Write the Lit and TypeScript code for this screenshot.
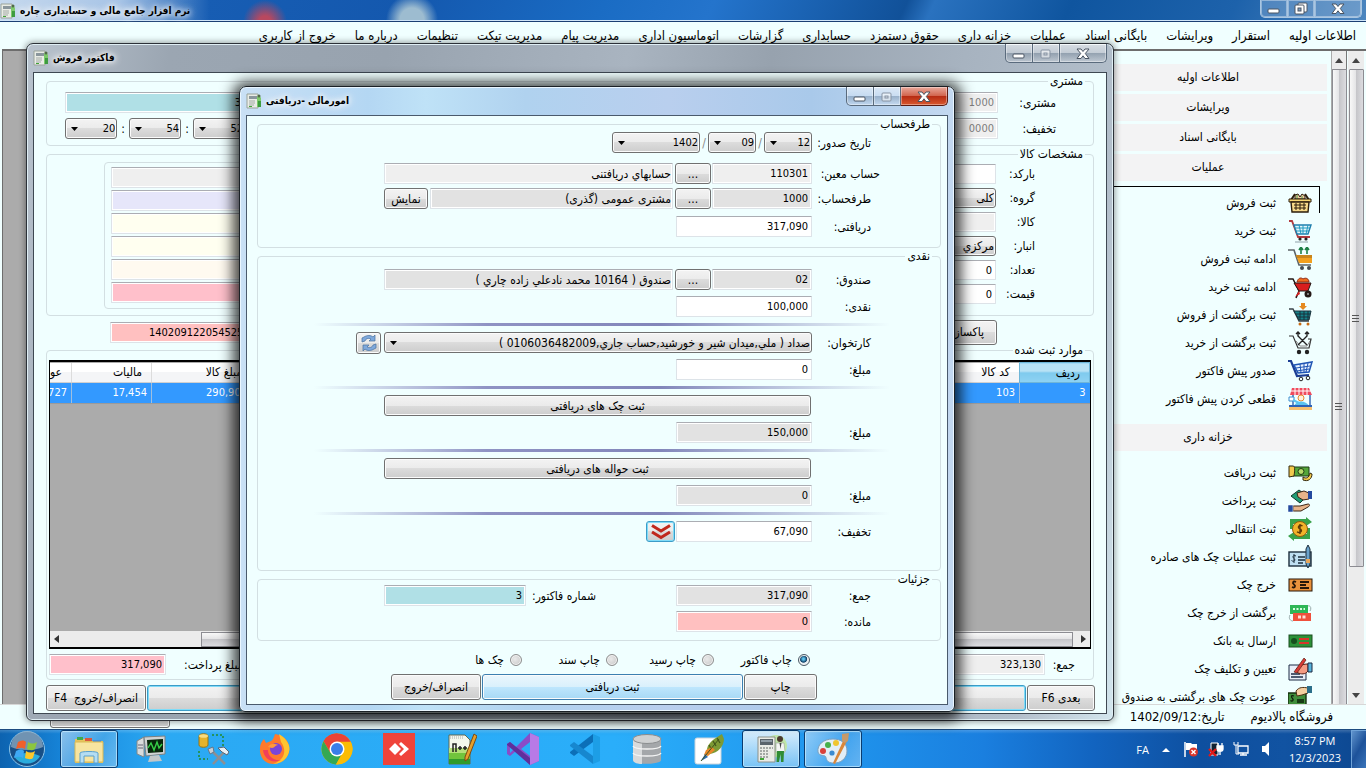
import { LitElement, html, css, svg, nothing } from "lit";
import { customElement } from "lit/decorators.js";

const base = css`
  :host, * { box-sizing: border-box; }
  :host {
    font-family: "DejaVu Sans Condensed", "DejaVu Sans", Tahoma, sans-serif;
    font-size: 12px;
    line-height: 14px;
    color: #000;
  }
  button, input, select { font: inherit; color: inherit; margin: 0; }
  button {
    height: 21px;
    padding: 0 4px;
    border: 1px solid #707070;
    border-radius: 3px;
    background: linear-gradient(#f3f3f3, #ebebeb 50%, #dcdcdc 50%, #cdcdcd);
    box-shadow: inset 0 0 0 1px #fbfbfb;
    text-align: center;
    white-space: nowrap;
  }
  button.focus { border-color: #3c9cc8; box-shadow: inset 0 0 0 1px #7fdcf8; }
  button.hot {
    border-color: #3c7fb1;
    background: linear-gradient(#eaf6fd, #d9f0fc 50%, #bee6fd 50%, #a7d9f5);
  }
  .field {
    height: 21px;
    min-width: 0;
    padding: 0 3px;
    border: 1px solid #dde3e8;
    border-top-color: #abadb3;
    border-radius: 1px;
    background: #fff;
    box-shadow: inset 0 0 0 1px #fff;
    direction: rtl;
    text-align: right;
    font-size: 11px;
    outline: none;
  }
  .text { font-size: 12px; padding: 0 1px; }
  .gray { background: #e2e2e2; }
  .soft { background: #efefef; }
  .off { background: #efefef; color: #7d7d7d; }
  .teal { background: #b0e0e6; }
  .rose { background: #ffc0c0; }
  .pink { background: #ffc0cb; }
  .lav { background: #e6e6fa; }
  .ivory { background: #fffff0; }
  .cream { background: #fffaf0; }
  .combo {
    height: 21px;
    min-width: 0;
    appearance: none;
    padding: 0 1px 0 18px;
    border: 1px solid #707070;
    border-radius: 3px;
    background:
      url("data:image/svg+xml,%3Csvg xmlns='http://www.w3.org/2000/svg' width='7' height='4'%3E%3Cpath d='M0 0h7L3.5 4z'/%3E%3C/svg%3E") no-repeat 5px 8px,
      linear-gradient(#f3f3f3, #ebebeb 50%, #dcdcdc 50%, #cdcdcd);
    box-shadow: inset 0 0 0 1px #fbfbfb;
    direction: rtl;
    text-align: right;
  }
  .digits { font-size: 11px; }
  fieldset {
    margin: 0 0 2px;
    padding: 0;
    min-width: 0;
    border: 1px solid #d3dfe2;
    border-radius: 4px;
  }
  legend { height: 12px; line-height: 12px; margin-inline-start: 8px; padding: 0 2px; }
  label { white-space: nowrap; }
  .row { display: flex; align-items: center; }
  .grow { flex: 1; min-width: 0; }

  .frame {
    display: flex;
    flex-direction: column;
    height: 100%;
    padding: 0 6px 6px;
    border: 1px solid #2c3138;
    border-radius: 7px 7px 6px 6px;
  }
  .title { display: flex; height: 28px; direction: ltr; align-items: center; gap: 4px; }
  .title h1 {
    margin: 0;
    flex: 1;
    font-size: 10px;
    font-weight: 700;
    text-shadow: 0 0 5px #fff, 0 0 8px #fff, 0 0 10px #fff;
    direction: rtl;
    text-align: left;
  }
  .caps { display: flex; align-self: flex-start; }
  .caps button {
    display: grid;
    place-items: center;
    width: 28px;
    height: 19px;
    padding: 0;
    border: 1px solid #5a6b7d;
    border-top: 0;
    border-radius: 0;
    background: linear-gradient(#ffffff80, #ffffff40 50%, #52657a50 50%, #ffffff30);
    box-shadow: inset 0 0 0 1px #ffffff60;
  }
  .caps button + button { border-left: 0; width: 27px; }
  .caps button:first-child { border-bottom-left-radius: 5px; }
  .caps button:last-child { width: 47px; border-bottom-right-radius: 5px; }
  .caps .red { background: linear-gradient(#e9a99c, #d2664f 48%, #b52a12 50%, #d9592f); border-color: #5c1a10; }
  svg { display: block; flex: none; }
`;

const capMin = svg`<rect x="2" y="7" width="11" height="4" rx="1" fill="#fff" stroke="#4a5563"/>`;
const capMax = svg`<rect x="3" y="3" width="9" height="8" rx="1" fill="#ffffff90" stroke="#8793a3"/><rect x="6" y="6" width="3" height="2" fill="none" stroke="#8793a3"/>`;
const capRestore = svg`<rect x="5" y="1" width="9" height="9" rx="1" fill="#fff" stroke="#4a5563"/><rect x="2" y="3" width="9" height="9" rx="1" fill="#fff" stroke="#4a5563"/><rect x="5" y="6" width="3" height="3" fill="#7fa0c4" stroke="#4a5563"/>`;
const capClose = svg`<path d="M2 2h4l2 2.500 2-2.500h4L10.300 6.500 14 11.500h-4L8 8.800 6 11.500H2l3.700-5z" fill="#fff" stroke="#4a5563" stroke-linejoin="round"/>`;

const glyph = (g: unknown) => html`<svg width="16" height="13" viewBox="0 0 16 13" aria-hidden="true">${g}</svg>`;
const caps = (mid: unknown, red = false) => html`<div class="caps">
  <button aria-label="کوچک کردن">${glyph(capMin)}</button>
  <button aria-label="بزرگ کردن">${glyph(mid)}</button>
  <button aria-label="بستن" class=${red ? "red" : ""}>${glyph(capClose)}</button>
</div>`;

const appGlyph = svg`
  <circle cx="21" cy="13" r="11" fill="#bfe6a8"/>
  <path d="M3 4h17v25H3z" fill="#e9ebe6" stroke="#8c918a"/>
  <path d="M5 6h13v6H5z" fill="#59636b"/><path d="M6 7h11v2H6z" fill="#8e9ba5"/>
  <path d="M5 15h13M5 18h9M5 21h9M5 24h9" stroke="#8d9490" stroke-width="1.500" stroke-dasharray="2 1"/>
  <path d="M5 25h4v2H5z" fill="#3fa535"/>
  <circle cx="25" cy="6" r="3" fill="#4b3a2e"/>
  <path d="M21 10h8l1 9h-9z" fill="#f4f6f4" stroke="#93a093" stroke-width=".6"/>
  <path d="M22 18h7l-.5 11h-2.500L25.500 21 24 29h-2.500z" fill="#2e8c35"/>
  <path d="M24.500 10l1 6 1-6z" fill="#444"/>`;

const smallGlyph = svg`
  <path d="M1 1h11v14H1z" fill="#e9ece6" stroke="#9aa39a"/>
  <path d="M3 3h8v3H3z" fill="#8a969c"/>
  <path d="M3 8h6M3 10h6M3 12h5" stroke="#a3aaa5"/>
  <path d="M3 13h3v1H3z" fill="#3fa535"/>
  <path d="M11 4l2-2 2 3v9h-4z" fill="#7cc96a"/><path d="M12 8h3v6h-3z" fill="#3a9a3c"/>
  <circle cx="13" cy="3" r="1.500" fill="#4f6b45"/>`;
const appIcon = html`<svg width="16" height="16" viewBox="0 0 16 16" aria-hidden="true">${smallGlyph}</svg>`;

const bill = (fill: string, ink: string) => svg`<rect x="1" y="6" width="23" height="12" fill=${fill} stroke=${ink}/>`;

const sideIcons: Record<string, unknown> = {
  basket: svg`<path d="M3 9l4-6M21 9l-4-6" stroke="#2b1d0c" stroke-width="2"/>
    <path d="M7 8V4l3-1 2 3 2-3 3 2v3z" fill="#f3c9a0" stroke="#2b1d0c"/><path d="M9 4v4M14 5v3" stroke="#49a04b"/>
    <path d="M1 8h22v3H1z" fill="#f7d774" stroke="#2b1d0c"/>
    <path d="M3 11h18l-1 10H4z" fill="#f7d98a" stroke="#2b1d0c" stroke-width="1.400"/>
    <path d="M6 14h12M6 17h12M8 12v7M12 12v7M16 12v7" stroke="#2b1d0c"/>`,
  buy: svg`<path d="M1 2h3l6 16h12" fill="none" stroke="#b23a3f" stroke-width="1.800"/>
    <path d="M6 6h17l-3 9H9z" fill="#e4f6fb" stroke="#1f7fae" stroke-width="1.400"/>
    <path d="M7 9h15M8 12h13M11 6l2 9M15 6v9M20 6l-2 9" stroke="#1f9ac0"/>
    <circle cx="12" cy="20" r="1.600" fill="#222"/><circle cx="18" cy="20" r="1.600" fill="#222"/><path d="M7 23h13" stroke="#8fa2aa"/>`,
  cartOrange: svg`<path d="M0 3h6l5 15h12" fill="none" stroke="#5d6468" stroke-width="1.600"/>
    <path d="M8 8h16v8H11z" fill="#f2a01f"/><path d="M8 8h16v3H9z" fill="#c9851c"/>
    <path d="M13 7V1M11 3l2-3 2 3M19 7V1M17 3l2-3 2 3" stroke="#1d7f46" stroke-width="1.600" fill="none"/>
    <circle cx="14" cy="21" r="2" fill="#434b52"/><circle cx="21" cy="21" r="2" fill="#434b52"/>`,
  barrow: svg`<path d="M0 4h5l6 12-3 7" fill="none" stroke="#231815" stroke-width="1.500"/>
    <path d="M6 8h17l-3 8h-9z" fill="#d81e1e" stroke="#231815"/><path d="M9 7c1-4 4-5 6-3 3-2 6 0 6 3z" fill="#ef6b1e" stroke="#8f2a12"/>
    <path d="M11 16l-4 6 5-3" fill="#d81e1e"/><circle cx="20" cy="19" r="3.500" fill="#231815"/><circle cx="20" cy="19" r="1" fill="#999"/>`,
  cartDown: svg`<path d="M1 6h4l6 12h10" fill="none" stroke="#39434a" stroke-width="1.400"/>
    <path d="M6 8h17l-2 9H11z" fill="#16828a" stroke="#18303a"/><path d="M8 11h14M9 14h12M12 8v9M16 8v9M20 8v9" stroke="#18303a"/>
    <path d="M13 0h4v3h2l-4 4-4-4h2z" fill="#e58a1f"/><circle cx="12" cy="21" r="1.500" fill="#c96a12"/><circle cx="20" cy="21" r="1.500" fill="#c96a12"/>`,
  cartLine: svg`<path d="M1 5h4l5 12h11l2-9h-3" fill="none" stroke="#333" stroke-width="1.200"/>
    <path d="M8 10l4 5h7l3-5" fill="none" stroke="#888"/>
    <path d="M10 1v4l9 9M19 1v4l-9 9M8 3l2-2 2 2M17 3l2-2 2 2" fill="none" stroke="#222" stroke-width="1.400"/>
    <circle cx="11" cy="21" r="2.200" fill="#222"/><circle cx="19" cy="21" r="2.200" fill="#222"/>`,
  cartBlue: svg`<path d="M0 2h3l6 15 12-1" fill="none" stroke="#1c3d94" stroke-width="2.200"/>
    <path d="M6 6l18-3-3 10-11 1z" fill="#e8f2ff" stroke="#1f55b5" stroke-width="1.500"/>
    <path d="M8 9l14-2M9 12l12-2M12 5l1 9M16 4v9M20 4l-2 9" stroke="#1f55b5"/>
    <circle cx="13" cy="20" r="1.800" fill="none" stroke="#222"/><circle cx="20" cy="19" r="1.800" fill="none" stroke="#222"/>`,
  shop: svg`<path d="M4 1h17l3 7H2z" fill="#ef4b5d"/><path d="M7 1v7M11 1v7M15 1v7M19 1v7M3 4h20" stroke="#fff"/>
    <path d="M5 8v12M22 8v12" stroke="#3b6bb5" stroke-width="1.500"/><circle cx="13" cy="11" r="3" fill="#fff1dc" stroke="#e78b2d"/>
    <path d="M6 19c2-6 12-6 15 0z" fill="#5cc4f0"/><path d="M1 10h5v4H1z" fill="#fff" stroke="#3d8fd0"/><path d="M5 13l6 3" stroke="#5cc4f0" stroke-width="2"/>
    <path d="M1 19h23v4H1z" fill="#f6c070"/><path d="M1 18h23v2H1z" fill="#2d63b8"/>`,
  receive: svg`<path d="M5 6h16v9H5z" fill="#54a63a" stroke="#1e3a14"/><circle cx="13" cy="10.500" r="3" fill="#b7dc6a" stroke="#1e3a14"/>
    <path d="M1 5h4c2 0 2 4 1 10l-5 1z" fill="#f2c94c" stroke="#332a10"/><path d="M15 16c3 2 6 1 7-4l2 1c0 5-4 8-9 6z" fill="#f2c94c" stroke="#332a10"/>`,
  pay: svg`<path d="M3 7l8-6 8 6-7 7z" fill="#1f9d75" stroke="#10382c"/><path d="M9 4l7-2 5 2v6l-6 1-5-3z" fill="#e7b48a" stroke="#3b2415"/>
    <path d="M20 2h4v8h-4z" fill="#234a9f"/><path d="M5 17h7l8-2c2 0 2 2 0 3l-7 4H5z" fill="#e7b48a" stroke="#3b2415"/><path d="M0 16h5v7H0z" fill="#234a9f" stroke="#fff" stroke-width=".5"/>`,
  transfer: svg`<path d="M2 2h16V0l6 5-6 4V7H5v5H2z" fill="#3aa24a"/><path d="M22 22H6v2l-6-5 6-4v2h13v-6h3z" fill="#3aa24a"/>
    <circle cx="12" cy="12" r="7.500" fill="#f2b32a" stroke="#8d5b10"/><path d="M14.500 9c-3-2-6 1.500-2.500 3s0 5-3 2.700M12 7v10" fill="none" stroke="#5c3a08" stroke-width="1.400"/>`,
  check: svg`<rect x="1" y="7" width="22" height="14" fill="#bfe0f2" stroke="#1c2e3c" stroke-width="1.400"/>
    <path d="M8 11c-3-1.500-4 1-2 2.500s0 4-2.500 2M6 9v9" fill="none" stroke="#1c2e3c"/><path d="M10 12h7M10 15h7M10 18h5" stroke="#1c2e3c" stroke-width="1.400"/>
    <path d="M18 4l2-4 2 4v15l-2 4-2-4z" fill="#6aa3cc" stroke="#1c2e3c"/><path d="M18 14h4v4h-4z" fill="#e7a75a"/>`,
  spend: svg`${bill("#e9923c", "#26170a")}<path d="M8 9c-3-1.500-4 1-2 2.500s1 4-2 2.500M12 9h9M12 12h6M12 15h9" fill="none" stroke="#26170a" stroke-width="1.800"/>`,
  back: svg`<rect x="2" y="4" width="18" height="9" fill="#2eb757"/><path d="M5 8h12" stroke="#d7ffe2" stroke-dasharray="2 1.500" stroke-width="2"/>
    <rect x="5" y="12" width="18" height="8" fill="#f0503c"/><path d="M10 16h9" stroke="#ffe0d8" stroke-dasharray="3 1.500" stroke-width="3"/><path d="M2 14c-2 4 1 6 3 6M22 10c2-3 0-6-2-5" stroke="#9aa" fill="none"/>`,
  bank: svg`${bill("#2d9138", "#1b4f20")}<circle cx="6" cy="12" r="3" fill="#174f1e"/><path d="M11 10h10M11 14h10" stroke="#d8352a" stroke-width="2"/>`,
  sign: svg`<path d="M1 8h17v15H1z" fill="#e8eef8" stroke="#1d2b45"/><path d="M3 17h9M3 20h12" stroke="#1d2b45" stroke-width="1.400"/>
    <path d="M8 13c2-4 6-6 12-6v7c-3 4-7 3-10 2z" fill="#f49b83" stroke="#5b1e14"/><path d="M6 15l10-14 2 2-9 13z" fill="#d83a34" stroke="#5b1e14" stroke-width=".7"/><path d="M20 6h4v9h-4z" fill="#56b3dc" stroke="#1d2b45"/>`,
  refund: svg`<path d="M0 8h18v12H0z" fill="#3f8d3a" stroke="#16300f" stroke-width="1.400"/><path d="M6 11c-3-1-3 1-1.500 2.500s0 3.500-2 2M9 15h7M9 17h7" stroke="#0d1f0a" fill="none" stroke-width="1.300"/>
    <path d="M8 6c3-4 7-4 12-3v5l-6 2-5 1z" fill="#f4cfa0" stroke="#4b2e12"/><path d="M19 1h5v7h-5z" fill="#2c6f8a"/>`,
};

const topHeads = ["اطلاعات اولیه", "ویرایشات", "بایگانی اسناد", "عملیات"];
const sales = [
  ["basket", "ثبت فروش"], ["buy", "ثبت خرید"], ["cartOrange", "ادامه ثبت فروش"], ["barrow", "ادامه ثبت خرید"],
  ["cartDown", "ثبت برگشت از فروش"], ["cartLine", "ثبت برگشت از خرید"], ["cartBlue", "صدور پیش فاکتور"], ["shop", "قطعی کردن پیش فاکتور"],
];
const treasury = [
  ["receive", "ثبت دریافت"], ["pay", "ثبت پرداخت"], ["transfer", "ثبت انتقالی"], ["check", "ثبت عملیات چک های صادره"],
  ["spend", "خرج چک"], ["back", "برگشت از خرج چک"], ["bank", "ارسال به بانک"], ["sign", "تعیین و تکلیف چک"], ["refund", "عودت چک های برگشتی به صندوق"],
];

@customElement("side-menu")
class SideMenu extends LitElement {
  static styles = [base, css`
    :host { display: flex; direction: rtl; min-height: 0; overflow: hidden; padding-right: 2px; background: #f0ffff; border-top: 2px solid #6d6d6d; }
    nav { width: 242px; padding: 13px 4px 0 0; overflow: hidden; }
    .head { height: 27px; margin-bottom: 3px; background: #f3f3f4; text-align: center; line-height: 27px; }
    .list { padding: 5px 14px 0 0; }
    .item { display: flex; height: 28px; align-items: center; gap: 12px; color: inherit; text-decoration: none; white-space: nowrap; }
    .sales { margin: 5px 7px 11px 0; padding: 2px 7px 0 0; border-top: 1px solid #000; position: relative; }
    .sales::after { content: ""; position: absolute; top: 0; right: 0; height: 26px; border-right: 1px solid #000; }
    .bar { width: 16px; display: flex; flex-direction: column; align-items: center; background: #ececec; flex: none; }
    .bar.inner { border-right: 1px solid #777; border-left: 1px solid #aaa; }
    .bar.outer { margin-left: 1px; }
    .arrow { height: 18px; display: grid; place-items: center; }
    .thumb { width: 15px; border: 1px solid #8c8c92; border-radius: 1px; background: linear-gradient(90deg, #f8f8f8, #e4e4e6 45%, #c6c6ca 50%, #dcdce0); display: grid; place-items: center; }
    .inner .thumb { flex: 1; border-bottom: 0; padding-top: 38px; }
    .outer .thumb { height: 498px; }
    .spare { flex: 1; }
  `];
  row([icon, text]: string[]) {
    return html`<a class="item" href="#"><svg width="25" height="24" viewBox="0 0 25 24" aria-hidden="true">${sideIcons[icon]}</svg><span>${text}</span></a>`;
  }
  render() {
    const grip = html`<svg width="8" height="8" aria-hidden="true"><path d="M0 1.500h7M0 4.500h7M0 7.500h7" stroke="#555"/></svg>`;
    const up = html`<span class="arrow"><svg width="8" height="5" aria-hidden="true"><path d="M0 5h8L4 0z" fill="#444"/></svg></span>`;
    const down = html`<span class="arrow"><svg width="8" height="5" aria-hidden="true"><path d="M0 0h8L4 5z" fill="#444"/></svg></span>`;
    return html`
      <div class="bar outer">${up}<div class="thumb">${grip}</div><span class="spare"></span>${down}</div>
      <div class="bar inner">${up}<div class="thumb">${grip}</div></div>
      <nav>
        ${topHeads.map((t) => html`<div class="head">${t}</div>`)}
        <div class="list sales">${sales.map((r) => this.row(r))}</div>
        <div class="head">خزانه داری</div>
        <div class="list">${treasury.map((r) => this.row(r))}</div>
      </nav>`;
  }
}

@customElement("sale-window")
class SaleWindow extends LitElement {
  static styles = [base, css`
    :host { display: block; direction: rtl; }
    .frame {
      background: linear-gradient(100deg, #b9c3ce, #9ba6b2 12%, #98a3af 30%, #a9b4c0 50%, #97a2ae 62%, #a7b3c0 78%, #b3bfcb 92%, #d3e6ee);
      box-shadow: inset 0 0 0 1px #dfeef4, 0 0 6px 1px #00000060;
    }
    .client { flex: 1; min-height: 0; display: flex; flex-direction: column; padding: 2px 12px; background: #f0ffff; border: 1px solid #3e4852; }
    .client > fieldset { padding-bottom: 6px; }
    .cust { display: flex; justify-content: space-between; padding: 5px 37px 0 18px; }
    .pair { display: flex; flex-direction: column; gap: 5px; }
    .pair label { width: 58px; }
    .who { width: 160px; }
    .time { width: 180px; gap: 4px; }
    .time select { flex: 1; }
    .goods { display: flex; justify-content: space-between; padding: 2px 58px 0 57px; }
    .items { display: grid; gap: 4px; align-content: start; padding-top: 2px; }
    .items label { width: 39px; }
    .items .field, .items .combo { height: 20px; width: 200px; }
    .stack { display: grid; gap: 2px; width: 300px; padding: 4px 6px 5px; border: 1px solid #d3dfe2; border-radius: 4px; }
    .mid { justify-content: space-between; padding: 2px 97px 0 64px; height: 26px; }
    .mid button { height: 25px; width: 64px; }
    .mid .field { width: 150px; }
    .client > .list { flex: 1; display: flex; flex-direction: column; min-height: 0; padding-bottom: 4px; }
    .lines { height: 100%; display: flex; flex-direction: column; min-height: 0; }
    .wrap { display: flex; flex-direction: column; flex: 1; margin: 4px 2px 5px; overflow: hidden; background: #ababab; border: 1px solid #000; border-width: 2px 1px; }
    table { width: calc(100% + 59px); border-collapse: collapse; table-layout: fixed; }
    th { height: 20px; padding: 0 9px; font-weight: 400; text-align: right; white-space: nowrap; background: linear-gradient(#fff 50%, #f4f5f7 50%); border-left: 1px solid #dcdcdc; border-bottom: 1px solid #d0d0d0; }
    th.sel { background: linear-gradient(#b8e2f5 40%, #7fcaee 50%, #8fd3f3); border: 1px solid #6fb6d8; }
    td { height: 21px; padding: 0 4px; font-size: 11px; background: #3399ff; color: #fff; border-left: 1px solid #9fbfdf; border-bottom: 1px solid #9a9a9a; }
    .no { width: 70px; } .code { width: 80px; } .price { width: 100px; } .tax { width: 80px; } .duty { width: 80px; }
    .hbar { display: flex; align-items: center; justify-content: space-between; height: 16px; margin-top: auto; background: #ececec; direction: ltr; padding: 0 4px; }
    .hthumb { flex: 1; height: 15px; margin: 0 8px 0 142px; border: 1px solid #8c8c92; background: linear-gradient(#f8f8f8, #e4e4e6 45%, #c6c6ca 50%, #dcdce0); }
    .sum { justify-content: space-between; padding: 0 18px 0 2px; }
    .sum label { width: 30px; }
    .sum .pay { width: auto; padding-left: 18px; }
    .sum .field { width: 117px; }
    .foot { display: flex; gap: 1px; margin: 3px -1px 0 0; }
    .foot button { height: 26px; }
    .foot .next { width: 68px; } .foot .quit { width: 100px; }
  `];
  render() {
    const goods: [string, string, string][] = [
      ["bar", "بارکد:", ""], ["grp", "گروه:", "کلی"], ["item", "کالا:", ""], ["store", "انبار:", "مرکزي"], ["qty", "تعداد:", "0"], ["cost", "قیمت:", "0"],
    ];
    return html`<section class="frame" aria-label="فاکتور فروش">
      <div class="title">${appIcon}<h1>فاکتور فروش</h1>${caps(capMax)}</div>
      <div class="client">
        <fieldset><legend>مشتری</legend><div class="cust">
          <div class="pair">
            <div class="row"><label for="c1">مشتری:</label><input id="c1" class="field off who" value="1000" disabled></div>
            <div class="row"><label for="c2">تخفیف:</label><input id="c2" class="field off who" value="0000" disabled></div>
          </div>
          <div class="pair">
            <input class="field teal time" aria-label="شماره" value="3">
            <div class="row time">
              <select class="combo digits" aria-label="ثانیه"><option>52</option></select>:
              <select class="combo digits" aria-label="دقیقه"><option>54</option></select>:
              <select class="combo digits" aria-label="ساعت"><option>20</option></select>
            </div>
          </div>
        </div></fieldset>
        <fieldset><legend>مشخصات کالا</legend><div class="goods">
          <div class="items">${goods.map(([id, l, v]) => html`<div class="row"><label for=${id}>${l}</label>${id === "grp" || id === "store"
            ? html`<select id=${id} class="combo"><option>${v}</option></select>`
            : html`<input id=${id} class="field ${id === "item" ? "soft" : ""}" .value=${v}>`}</div>`)}</div>
          <div class="stack">${["soft", "lav", "ivory", "ivory", "cream", "pink"].map((c) => html`<input class="field ${c}" aria-label="اطلاعات کالا" readonly>`)}</div>
        </div></fieldset>
        <div class="row mid"><button>پاکسازی</button><input class="field rose" aria-label="شناسه" value="14020912205452528"></div>
        <fieldset class="list"><legend>موارد ثبت شده</legend><div class="lines">
          <div class="wrap">
            <table>
              <thead><tr><th class="no sel">ردیف</th><th class="code">کد کالا</th><th></th><th class="price">مبلغ کالا</th><th class="tax">مالیات</th><th class="duty">عوارض</th></tr></thead>
              <tbody><tr><td>3</td><td>103</td><td></td><td>290,909</td><td>17,454</td><td>8,727</td></tr></tbody>
            </table>
            <div class="hbar">
              <svg width="5" height="8" aria-hidden="true"><path d="M5 0v8L0 4z" fill="#333"/></svg><span class="hthumb"></span>
              <svg width="5" height="8" aria-hidden="true"><path d="M0 0v8l5-4z" fill="#333"/></svg>
            </div>
          </div>
          <div class="row sum">
            <div class="row"><label for="total">جمع:</label><input id="total" class="field soft" value="323,130"></div>
            <div class="row"><label class="pay" for="paid">مبلغ پرداخت:</label><input id="paid" class="field pink" value="317,090"></div>
          </div>
        </div></fieldset>
        <div class="foot"><button class="next">بعدی F6</button><button class="grow focus" aria-label="ثبت"></button><button class="quit">انصراف/خروج&nbsp; F4</button></div>
      </div>
    </section>`;
  }
}

@customElement("receipt-dialog")
class ReceiptDialog extends LitElement {
  static styles = [base, css`
    :host { display: block; direction: rtl; }
    .frame {
      height: auto;
      background: linear-gradient(90deg, #c9e0f5, #b4d7f3 18%, #bfe2f7 26%, #b0d2ef 40%, #b9cfee 60%, #a9c9ea 80%, #c3d8f0);
      border-color: #1b2126;
      box-shadow: inset 0 0 0 1px #eaf6ff, 0 2px 14px 6px #000000c0;
    }
    .client { padding: 2px 6px 4px 10px; background: #f0ffff; border: 1px solid #4a5a6c; }
    .rows { display: grid; grid-template-columns: minmax(0, 1fr); gap: 6px; padding: 0 60px 8px 126px; }
    .party { padding-top: 2px; padding-bottom: 10px; gap: 4px; }
    .date { margin-bottom: 6px; }
    .gap { margin-top: 3px; }
    .cash { padding-top: 7px; padding-bottom: 28px; }
    .sums { gap: 5px; }
    .row label { width: 68px; padding-right: 9px; }
    .row .wide { padding-right: 0; }
    .d { width: 48px; } .y { width: 88px; }
    .date i { width: 8px; text-align: center; color: #888; font-style: normal; }
    .code { width: 100px; }
    .dots { width: 36px; margin: 0 1px 0 2px; }
    .show { width: 44px; margin-right: 2px; padding: 0; }
    .num { width: 136px; }
    hr { height: 3px; margin: 0 -10px 0 -70px; border: 0; background: linear-gradient(90deg, #8888b800, #8f93c4 30%, #8286ba 60%, #8888b800); align-self: center; }
    .bank { position: relative; }
    .sync { position: absolute; left: -28px; width: 25px; height: 22px; padding: 0; display: grid; place-items: center; }
    .full { margin-right: 69px; }
    .more { width: 29px; margin-right: 1px; padding: 0; display: grid; place-items: center; }
    .sums .inv { width: auto; padding: 0 0 0 6px; margin-right: auto; }
    .invno { width: 142px; }
    .opts { display: flex; margin-top: 9px; padding-right: 131px; height: 20px; }
    .opts label { width: 96px; display: flex; align-items: center; gap: 6px; }
    .opts input {
      appearance: none; width: 12px; height: 12px; border: 1px solid #8e8f8f; border-radius: 50%;
      background: radial-gradient(circle at 40% 40%, #e9e9e9, #c4c4c4); box-shadow: inset 0 0 0 1px #f4f4f4;
    }
    .opts input:checked { border-color: #4a5a66; background: radial-gradient(circle at 45% 40%, #5fc5ee 10%, #0f3f66 40%, #e8eef2 50%); }
    .acts { display: flex; gap: 1px; margin: 4px 124px 0 134px; }
    .acts button { height: 26px; }
    .print { width: 73px; } .cancel { width: 90px; }
  `];
  amount(id: string, label: string, value: string, cls = "", extra: unknown = nothing) {
    return html`<div class="row ${id === "got" ? "gap" : ""}"><label for=${id}>${label}</label><input id=${id} class="field num ${cls}" .value=${value}>${extra}</div>`;
  }
  lookup(id: string, label: string, code: string, name: string, cls: string, extra: unknown = nothing) {
    return html`<div class="row"><label for=${id} class=${id === "acc" ? "wide" : ""}>${label}</label><input id=${id} class="field code ${cls}" .value=${code}>
      <button class="dots">...</button><input class="field text grow ${cls}" aria-label="نام" .value=${name}>${extra}</div>`;
  }
  render() {
    return html`<section class="frame" role="dialog" aria-label="امورمالی -دریافتی">
      <div class="title">${appIcon}<h1>امورمالی -دریافتی</h1>${caps(capMax, true)}</div>
      <div class="client">
        <fieldset><legend>طرفحساب</legend><div class="rows party">
          <div class="row date"><label for="day">تاریخ صدور:</label>
            <select id="day" class="combo digits d"><option>12</option></select><i>/</i>
            <select class="combo digits d" aria-label="ماه"><option>09</option></select><i>/</i>
            <select class="combo digits y" aria-label="سال"><option>1402</option></select></div>
          ${this.lookup("acc", "حساب معین:", "110301", "حسابهاي دریافتنی", "soft")}
          ${this.lookup("party", "طرفحساب:", "1000", "مشتری عمومی (گذری)", "gray", html`<button class="show">نمایش</button>`)}
          ${this.amount("got", "دریافتی:", "317,090")}
        </div></fieldset>
        <fieldset><legend>نقدی</legend><div class="rows cash">
          ${this.lookup("box", "صندوق:", "02", "صندوق ( 10164 محمد نادعلي زاده چاري )", "gray")}
          ${this.amount("cash", "نقدی:", "100,000")}
          <hr>
          <div class="row bank"><label for="pos">کارتخوان:</label>
            <select id="pos" class="combo grow"><option>صداد ( ملي,میدان شیر و خورشید,حساب جاري,0106036482009 )</option></select>
            <button class="sync" aria-label="بازخوانی"><svg width="16" height="16" viewBox="0 0 16 16" aria-hidden="true">
              <path d="M1 7V3l2-1c3-2 7-2 9 0l2-2v6H8l2-2C8 3 5 3 4 6z" fill="#7fa9dc" stroke="#47709f" stroke-width=".7"/>
              <path d="M15 9v4l-2 1c-3 2-7 2-9 0l-2 2v-6h6l-2 2c2 1 5 1 6-2z" fill="#7fa9dc" stroke="#47709f" stroke-width=".7"/></svg></button></div>
          ${this.amount("posAmt", "مبلغ:", "0")}
          <hr>
          <button class="full">ثبت چک های دریافتی</button>
          ${this.amount("chkAmt", "مبلغ:", "150,000", "gray")}
          <hr>
          <button class="full">ثبت حواله های دریافتی</button>
          ${this.amount("trAmt", "مبلغ:", "0", "gray")}
          <hr>
          ${this.amount("disc", "تخفیف:", "67,090", "", html`<button class="more focus" aria-label="بیشتر"><svg width="20" height="16" viewBox="0 0 20 16" aria-hidden="true">
            <path d="M1 1.500l9 5.500 9-5.500M1 8l9 5.500L19 8" fill="none" stroke="#c0271c" stroke-width="3"/></svg></button>`)}
        </div></fieldset>
        <fieldset><legend>جزئیات</legend><div class="rows sums">
          ${this.amount("sum", "جمع:", "317,090", "gray", html`<label class="inv" for="inv">شماره فاکتور:</label><input id="inv" class="field teal invno" value="3">`)}
          ${this.amount("rest", "مانده:", "0", "rose")}
        </div></fieldset>
        <div class="opts">${["چاپ فاکتور", "چاپ رسید", "چاپ سند", "چک ها"].map((t, i) => html`<label><input type="radio" name="print" ?checked=${i === 0}>${t}</label>`)}</div>
        <div class="acts"><button class="print">چاپ</button><button class="grow hot">ثبت دریافتی</button><button class="cancel">انصراف/خروج</button></div>
      </div>
    </section>`;
  }
}

const taskIcons: [string, unknown][] = [
  ["Explorer", svg`<path d="M2 6h10l2 2h16v22H2z" fill="#e8c35c"/><path d="M4 4h6v3H4z" fill="#3faa4c"/><path d="M12 5h7v3h-7z" fill="#d8573f"/><path d="M20 7h8v3h-8z" fill="#4a90d8"/>
    <path d="M2 9h28v20H2z" fill="#f7e4a0" stroke="#d9b955"/><path d="M7 30V20c0-2 18-2 18 0v10h-4v-7H11v7z" fill="#b5ddf2" stroke="#5aa0cc"/>`],
  ["Monitor", svg`<path d="M2 8l7-4v20l-7-3z" fill="#d9dcdd" stroke="#808688"/><path d="M3 12h5M3 15h5" stroke="#667"/><path d="M9 4l21-1v18l-19 2z" fill="#cfd3d4" stroke="#7b8082"/><path d="M12 7l16-1v13l-15 1z" fill="#07260b"/>
    <path d="M13 15l3-5 3 7 3-8 2 6 3-4" fill="none" stroke="#36d048" stroke-width="1.400"/><path d="M15 23l9-1 3 6-14 1z" fill="#c2c7c9"/>`],
  ["Tools", svg`<path d="M2 3c0-3 9-3 9 0v9c0 3-9 3-9 0z" fill="#e5b32b" stroke="#9a7412"/><ellipse cx="6.500" cy="3" rx="4.500" ry="1.800" fill="#f8dc80"/>
    <path d="M15 2h11v11M2 18v8h9" fill="none" stroke="#258a2e" stroke-width="1.500" stroke-dasharray="2 2"/>
    <path d="M14 17l14 14M29 17L16 31" stroke="#8b8f95" stroke-width="2.500"/><path d="M21 15l6-1 5 5-2 3-5-3z" fill="#e6eef5" stroke="#567"/><path d="M11 16l5-2 1 5-4 2z" fill="#c9d0d5" stroke="#678"/>`],
  ["Firefox", svg`<path d="M16 1c9 1 16 8 14 18-2 8-9 12-16 12C6 31 0 24 1 15c0-4 2-7 4-9l2 4 5-2c2-1 3-4 4-7z" fill="#ff7a2b"/>
    <path d="M20 1c8 5 12 12 10 18-2 8-9 12-16 12 12-4 14-14 8-22z" fill="#ffc530"/><path d="M4 17c1 9 9 14 18 10-8 1-13-4-13-10z" fill="#f0405c"/><circle cx="17" cy="16" r="6" fill="#7a45d8"/><path d="M9 14c3-5 8-3 10-2-3 0-3 3-6 3z" fill="#ff9a3a"/>`],
  ["Chrome", svg`<circle cx="16" cy="16" r="15.500" fill="#fbbc05"/><path d="M16 .5A15.500 15.500 0 0 0 2.600 8.200L9.500 20 16 16h14.500A15.500 15.500 0 0 0 29.500 8.500z" fill="#ea4335"/>
    <path d="M2.600 8.200A15.500 15.500 0 0 0 15 31.500l6.500-11.700L16 16l-6.500 4z" fill="#34a853"/><path d="M15 31.500A15.500 15.500 0 0 0 29.500 8.500H16l6 11z" fill="#fbbc05"/><path d="M2.600 8.200A15.500 15.500 0 0 1 29.500 8.500H16z" fill="#ea4335"/><circle cx="16" cy="16" r="7.500" fill="#fff"/><circle cx="16" cy="16" r="6" fill="#3a7ee8"/>`],
  ["AnyDesk", svg`<path d="M0 0h32v32H0z" fill="#ef443b"/><path d="M6 16l6-6 6 6-6 6z" fill="#fff"/><path d="M16 11l2-2 8 7-8 7-2-2 5-5z" fill="#fff"/>`],
  ["Notepad++", svg`<path d="M4 2h16l5 5v24H4z" fill="#f4f8ec" stroke="#5f6b52"/><path d="M4 15h21v8H4z" fill="#b4e079"/><path d="M4 20h21v7H4z" fill="#71c43c"/><path d="M4 26h21v5H4z" fill="#2f9b2b"/><path d="M5 3h14M5 5h14" stroke="#aaa" stroke-dasharray="1 1"/>
    <path d="M8 19v-8h3v8M13 15h4M15 13v4M18 15h4M20 13v4" fill="none" stroke="#222" stroke-width="1.500"/><path d="M32 3l-3-2-9 23v4l3-2z" fill="#e6a02c" stroke="#7d4a12"/>`],
  ["Visual Studio", svg`<path d="M23 0l9 4v24l-9 4L9 18l-6 5-3-2V11l3-2 6 5zM3 12v8l4-4zM23 9l-9 7 9 7z" fill="#8a4cc8" fill-rule="evenodd"/><path d="M23 0l9 4v24l-9 4z" fill="#b77ae6"/><path d="M0 11l3-2 20 16v7L0 12z" fill="#5f2f9c"/>`],
  ["VS Code", svg`<path d="M24 1l7 3v24l-7 3z" fill="#1d9ee6"/><path d="M24 1v8L5 23l-4-3v-1z" fill="#0c6fb8"/><path d="M24 31v-8L5 9l-4 3v1z" fill="#1787cf"/>`],
  ["Database", svg`<path d="M2 6v21c0 5 28 5 28 0V6z" fill="#a4a7aa"/><path d="M2 6v21c0 4 9 4 9 4V8z" fill="#d8dadb"/><path d="M2 13c2 4 26 4 28 0M2 20c2 4 26 4 28 0" fill="none" stroke="#f3f4f4" stroke-width="1.500"/><ellipse cx="16" cy="6" rx="14" ry="4.500" fill="#cfd1d2" stroke="#8b8e90"/>`],
  ["Editor", svg`<rect x="2" y="5" width="26" height="26" rx="2" fill="#fff" stroke="#c9d4dc"/><path d="M29 1c-5 3-14 8-15 15l3 5c8-1 14-8 14-15z" fill="#7c9a35"/><path d="M20 8l3 5M24 5l3 5M16 12l3 5" stroke="#45581c" stroke-width="1.300"/><path d="M13 17l6-3 3 3-7 6-4-1z" fill="#e88728"/><path d="M8 28l4-7 3 3z" fill="#2d6bb0"/><path d="M8 28L26 6" stroke="#41551a"/>`],
  ["Accounting", appGlyph],
  ["Paint", svg`<path d="M16 6C6 6 0 12 1 19c1 4 5 3 7 4s0 6 7 7c9 1 15-5 15-12 0-8-6-12-14-12z" fill="#e3eef6" stroke="#7da0bd"/>
    <circle cx="6" cy="18" r="3" fill="#d9403a"/><circle cx="11" cy="12" r="3" fill="#48b04a"/><circle cx="19" cy="10" r="3" fill="#f0c52e"/><circle cx="15" cy="20" r="2.600" fill="#3b8bd0"/>
    <path d="M27 6l3 2-12 23-2-1z" fill="#d9873a"/><path d="M25 1l7-1-1 8-3 2-3-2z" fill="#c69a6a"/>`],
];

@customElement("task-bar")
class TaskBar extends LitElement {
  static styles = [base, css`
    :host {
      display: flex; direction: ltr; height: 39px; align-items: center; color: #fff; overflow: hidden;
      font-family: "Open Sans", sans-serif; border-top: 1px solid #1c4b80;
      background: linear-gradient(#ffffff30, #ffffff00 10%), linear-gradient(90deg, #0d63b0, #1787dc 5%, #2ba9f3 12%, #2aaefa 45%, #1f93ec 62%, #1a7fdf 72%, #1264c0 80%, #0e4f9f 88%, #1153a2 94%, #0d4790);
    }
    .start { padding: 0 8px; }
    .apps { display: flex; gap: 4px; padding-left: 6px; }
    .app { display: grid; place-items: center; width: 58px; height: 38px; padding: 0; border: 1px solid transparent; background: none; box-shadow: none; }
    .open { border-color: #0a3c70; box-shadow: inset 0 0 0 1px #c8ecffb0; background: linear-gradient(120deg, #ffffff80, #ffffff28 60%, #ffffff50); }
    .active { background: linear-gradient(#ffffffd0, #cdeafb80); }
    .tray { display: flex; align-items: center; margin-left: auto; gap: 9px; font-size: 11px; line-height: 17px; }
    .clock { text-align: center; margin: 0 1px 0 6px; }
    .peek { width: 15px; height: 39px; border: 1px solid #6fa3d8; border-right: 0; border-radius: 0; background: linear-gradient(120deg, #5f93cc, #1d529a 50%, #3b75ba); box-shadow: none; }
  `];
  render() {
    return html`
      <svg class="start" width="54" height="38" viewBox="0 0 38 38" aria-hidden="true">
        <circle cx="19" cy="19" r="17.500" fill="#174f86" stroke="#8ec6ea"/><path d="M3 17a16 16 0 0 1 32 0c-8 4-24 4-32 0z" fill="#8fa9c0" opacity=".75"/><path d="M6 26c5 10 21 10 26 0-8-4-18-4-26 0z" fill="#2fc3f2" opacity=".8"/>
        <path d="M10 12c3-2 6-2 8 0l-1 7c-3-2-6-1-9 0z" fill="#f0602b"/><path d="M20 12c3 2 6 2 9 0l-2 7c-3 2-6 1-8 0z" fill="#8cc63f"/><path d="M8 21c3-2 6-2 8 0l-1 7c-3-2-6-1-9 0z" fill="#3fa9f5"/><path d="M18 21c3 2 6 2 9 0l-2 7c-2 2-6 1-8 0z" fill="#fcc72b"/>
      </svg>
      <div class="apps">${taskIcons.map(([name, g], i) => html`<button class="app ${i === 0 || i > 10 ? "open" : ""} ${i === 11 ? "active" : ""}" aria-label=${name}>
        <svg width="32" height="32" viewBox="0 0 32 32" aria-hidden="true">${g}</svg></button>`)}</div>
      <div class="tray">
        <span>FA</span>
        <svg width="16" height="16" viewBox="0 0 16 16" aria-hidden="true"><path d="M4 11h8L8 7z" fill="#fff"/></svg>
        <svg width="16" height="16" viewBox="0 0 16 16" aria-hidden="true"><path d="M2 1v15" stroke="#fff" stroke-width="1.500"/><path d="M3 2h5l1 1h5v8H8L7 9H3z" fill="#fff"/><circle cx="10.500" cy="11" r="4.500" fill="#d8352a"/><path d="M8.500 9l4 4M12.500 9l-4 4" stroke="#fff" stroke-width="1.400"/></svg>
        <svg width="16" height="16" viewBox="0 0 16 16" aria-hidden="true"><path d="M3 2h7v12H3z" fill="#123" stroke="#fff"/><path d="M9 5h6v3c0 3-6 3-6 0zM10 2v3M14 2v3M12 10v4" fill="#fff" stroke="#fff" stroke-width="1.300"/><path d="M1 8l7 7M8 8l-7 7" stroke="#e01818" stroke-width="2.400"/></svg>
        <svg width="16" height="16" viewBox="0 0 16 16" aria-hidden="true"><path d="M5 5h10v7H5zM7 14h7M10 12v2" fill="none" stroke="#fff" stroke-width="1.300"/><path d="M1 1v3h4V1M3 4v9h3" fill="none" stroke="#fff"/></svg>
        <svg width="16" height="16" viewBox="0 0 16 16" aria-hidden="true"><path d="M4 5h3l4-4v14l-4-4H4z" fill="#fff"/></svg>
        <div class="clock">8:57 PM<br>12/3/2023</div>
        <button class="peek" aria-label="Show desktop"></button>
      </div>`;
  }
}

const menu = ["اطلاعات اولیه", "استقرار", "ویرایشات", "بایگانی اسناد", "عملیات", "خزانه داری", "حقوق دستمزد", "حسابداری", "گزارشات", "اتوماسیون اداری", "مدیریت پیام", "مدیریت تیکت", "تنظیمات", "درباره ما", "خروج از کاربری"];

@customElement("app-root")
class AppRoot extends LitElement {
  static styles = [base, css`
    :host { position: relative; display: grid; grid-template-rows: 22px 27px minmax(0, 1fr) 25px 39px; height: 100vh; direction: rtl; overflow: hidden; background: #f0ffff; }
    .title.top {
      height: 22px; border-bottom: 1px solid #1b3f73; box-shadow: inset 0 -1px 0 #cfe4f7; padding-right: 4px;
      background:
        linear-gradient(90deg, #c6d9ee 0, #a7c4e6 120px, #a7c4e600 210px),
        radial-gradient(circle at 265px 22px, #b8485f 6px, #b8485f00 22px),
        radial-gradient(circle at 412px 20px, #9dbcd0 12px, #9dbcd000 26px),
        linear-gradient(115deg, #1a62b8, #1458ae 30%, #1a6cc4 44%, #2474cc 52%, #115199 66%, #2a72bf 68%, #0f559f 78%, #1d62ab 90%, #4d86bf);
    }
    .top .caps button { height: 18px; border-color: #a9c6e2; background: #ffffff30; }
    .menu { display: flex; gap: 19px; align-items: center; padding-right: 10px; font-size: 13px; white-space: nowrap; }
    .menu a { color: inherit; text-decoration: none; }
    .mdi { display: flex; justify-content: space-between; min-height: 0; background: #ababab; border-left: 2px solid #f0ffff; box-shadow: inset 1px 2px 0 #6d6d6d; }
    .status { display: flex; gap: 26px; align-items: center; padding: 0 33px 0 50px; font-size: 13px; border-top: 1px solid #d7d7d7; }
    .status button { width: 120px; margin-right: auto; }
    sale-window { position: absolute; inset: 43px 252px 47px 26px; }
    receipt-dialog { position: absolute; top: 86px; left: 239px; right: 411px; }
  `];
  render() {
    return html`
      <header class="title top">${appIcon}<h1>نرم افزار جامع مالی و حسابداری چاره</h1>${caps(capRestore)}</header>
      <nav class="menu">${menu.map((m) => html`<a href="#">${m}</a>`)}</nav>
      <main class="mdi"><side-menu></side-menu></main>
      <footer class="status"><span>فروشگاه پالادیوم</span><span>تاریخ:1402/09/12</span><button aria-label="وضعیت"></button></footer>
      <task-bar></task-bar>
      <sale-window></sale-window>
      <receipt-dialog></receipt-dialog>`;
  }
}
